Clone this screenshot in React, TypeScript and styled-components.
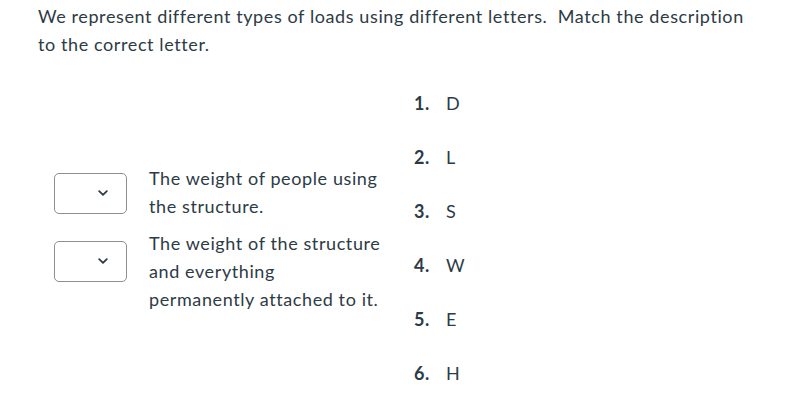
import styled, { createGlobalStyle } from 'styled-components';

const Global = createGlobalStyle`
  body {
    margin: 0;
    background: #fff;
    color: #2d3b45;
    font-family: Lato, "Open Sans", sans-serif;
    font-size: 18px;
    letter-spacing: 0.6px;
    line-height: 28px;
  }
`;

const Page = styled.main`
  padding: 2px 38px 0;
`;

const Prompt = styled.p`
  margin: 0;
  max-width: 720px;
`;

const Board = styled.div`
  align-items: center;
  display: flex;
  gap: 31px;
  margin-top: 18px;
`;

const Pairs = styled.div`
  display: flex;
  flex-direction: column;
  gap: 9px;
  padding-left: 16px;
`;

const Pair = styled.div`
  align-items: flex-start;
  display: flex;
  gap: 22px;
`;

const Select = styled.button<{ $offset: number }>`
  align-items: center;
  background: #fff;
  border: 1px solid #8e8e8e;
  border-radius: 5px;
  display: flex;
  flex-shrink: 0;
  height: 41px;
  justify-content: flex-end;
  margin-top: ${(p) => p.$offset}px;
  padding: 0 18px 0 0;
  width: 73px;
`;

const Description = styled.div`
  width: 234px;
`;

const Answers = styled.ol`
  list-style: none;
  margin: 0;
  padding: 0;
`;

const Answer = styled.li`
  display: flex;
  padding: 13px 0;
`;

const Num = styled.span`
  font-weight: 700;
  width: 32px;
`;

function Chevron() {
  return (
    <svg width="10" height="6" viewBox="0 0 10 6" fill="none">
      <path d="M1.2 1.2 5 4.8 8.8 1.2" stroke="#2d3b45" strokeWidth="1.8" strokeLinecap="round" strokeLinejoin="round" />
    </svg>
  );
}

const pairs = [
  { text: 'The weight of people using the structure.', offset: 9 },
  { text: 'The weight of the structure and everything permanently attached to it.', offset: 12 },
];

const letters = ['D', 'L', 'S', 'W', 'E', 'H'];

export default function App() {
  return (
    <>
      <Global />
      <Page>
        <Prompt>
          We represent different types of loads using different letters.&nbsp; Match the description to the correct letter.
        </Prompt>
        <Board>
          <Pairs>
            {pairs.map((p) => (
              <Pair key={p.text}>
                <Select $offset={p.offset} aria-label="Choose a letter">
                  <Chevron />
                </Select>
                <Description>{p.text}</Description>
              </Pair>
            ))}
          </Pairs>
          <Answers>
            {letters.map((l, i) => (
              <Answer key={l}>
                <Num>{i + 1}.</Num>
                <span>{l}</span>
              </Answer>
            ))}
          </Answers>
        </Board>
      </Page>
    </>
  );
}
